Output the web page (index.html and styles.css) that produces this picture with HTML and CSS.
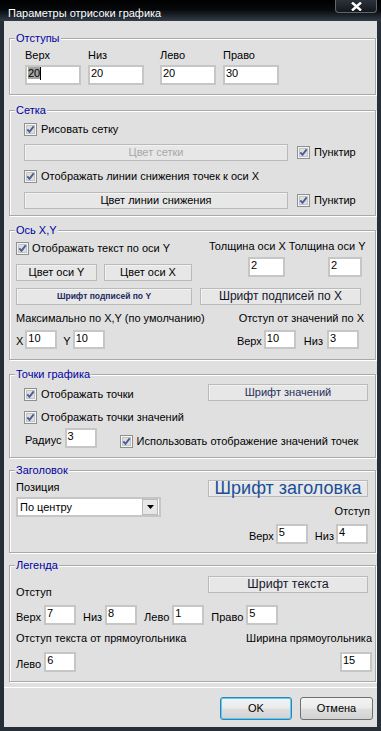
FILE: index.html
```html
<!DOCTYPE html>
<html lang="ru">
<head>
  <meta charset="UTF-8" />
  <title>Параметры отрисоки графика</title>
  <link rel="stylesheet" href="styles.css">
</head>
<body>
  <div class="window">
    <div class="titlebar">
      <span class="title">Параметры отрисоки графика</span>
      <span class="close">
        <svg width="11" height="9" viewBox="0 0 11 9"><path d="M1 0.5 L10 8.5 M10 0.5 L1 8.5" stroke="#fff" stroke-width="2.4"/></svg>
      </span>
    </div>

    <div class="client">
      <!-- Отступы -->
      <div class="group g-margins">
        <div class="caption">Отступы</div>
        <div class="margins-row">
          <div class="cell"><span>Верх</span><div class="edit"><span class="sel">20</span><i class="caret"></i></div></div>
          <div class="cell"><span>Низ</span><div class="edit">20</div></div>
          <div class="cell spaced"><span>Лево</span><div class="edit">20</div></div>
          <div class="cell"><span>Право</span><div class="edit">30</div></div>
        </div>
      </div>

      <!-- Сетка -->
      <div class="group g-grid">
        <div class="caption">Сетка</div>
        <div class="check grid-r1">
          <svg class="chk" viewBox="0 0 13 13"><rect x="0.5" y="0.5" width="12" height="12" fill="#f4f4f4" stroke="#8e8f8f"/><rect x="2.5" y="2.5" width="8" height="8" fill="#dedede" stroke="#c4c4c4"/><path d="M3.3 6.3 L5.5 8.8 L9.7 3.4" fill="none" stroke="#4a5d98" stroke-width="1.9"/></svg>
          <span>Рисовать сетку</span>
        </div>
        <div class="row grid-r2">
          <div class="btn wide disabled">Цвет сетки</div>
          <div class="check push">
            <svg class="chk" viewBox="0 0 13 13"><rect x="0.5" y="0.5" width="12" height="12" fill="#f4f4f4" stroke="#8e8f8f"/><rect x="2.5" y="2.5" width="8" height="8" fill="#dedede" stroke="#c4c4c4"/><path d="M3.3 6.3 L5.5 8.8 L9.7 3.4" fill="none" stroke="#4a5d98" stroke-width="1.9"/></svg>
            <span>Пунктир</span>
          </div>
        </div>
        <div class="check grid-r3">
          <svg class="chk" viewBox="0 0 13 13"><rect x="0.5" y="0.5" width="12" height="12" fill="#f4f4f4" stroke="#8e8f8f"/><rect x="2.5" y="2.5" width="8" height="8" fill="#dedede" stroke="#c4c4c4"/><path d="M3.3 6.3 L5.5 8.8 L9.7 3.4" fill="none" stroke="#4a5d98" stroke-width="1.9"/></svg>
          <span>Отображать линии снижения точек к оси X</span>
        </div>
        <div class="row grid-r4">
          <div class="btn wide">Цвет линии снижения</div>
          <div class="check push">
            <svg class="chk" viewBox="0 0 13 13"><rect x="0.5" y="0.5" width="12" height="12" fill="#f4f4f4" stroke="#8e8f8f"/><rect x="2.5" y="2.5" width="8" height="8" fill="#dedede" stroke="#c4c4c4"/><path d="M3.3 6.3 L5.5 8.8 L9.7 3.4" fill="none" stroke="#4a5d98" stroke-width="1.9"/></svg>
            <span>Пунктир</span>
          </div>
        </div>
      </div>

      <!-- Ось X,Y -->
      <div class="group g-axis">
        <div class="caption">Ось X,Y</div>
        <div class="axis-top">
          <div class="axis-left">
            <div class="check axis-check">
              <svg class="chk" viewBox="0 0 13 13"><rect x="0.5" y="0.5" width="12" height="12" fill="#f4f4f4" stroke="#8e8f8f"/><rect x="2.5" y="2.5" width="8" height="8" fill="#dedede" stroke="#c4c4c4"/><path d="M3.3 6.3 L5.5 8.8 L9.7 3.4" fill="none" stroke="#4a5d98" stroke-width="1.9"/></svg>
              <span>Отображать текст по оси Y</span>
            </div>
            <div class="axis-btns">
              <div class="btn btn-ay">Цвет оси Y</div>
              <div class="btn btn-ax">Цвет оси X</div>
            </div>
            <div class="btn btn-fonty">Шрифт подписей по Y</div>
          </div>
          <div class="axis-right">
            <div class="thick-labels">
              <span>Толщина оси X</span>
              <span>Толщина оси Y</span>
            </div>
            <div class="thick-edits">
              <div class="edit e-thx">2</div>
              <div class="edit e-thy">2</div>
            </div>
            <div class="btn btn-fontx">Шрифт подписей по X</div>
          </div>
        </div>
        <div class="axis-labels">
          <span>Максимально по X,Y (по умолчанию)</span>
          <span>Отступ от значений по X</span>
        </div>
        <div class="axis-edits">
          <span class="lbl">X</span>
          <div class="edit small">10</div>
          <span class="lbl gap-y">Y</span>
          <div class="edit small">10</div>
          <span class="lbl push-right">Верх</span>
          <div class="edit small">10</div>
          <span class="lbl gap-niz">Низ</span>
          <div class="edit small last">3</div>
        </div>
      </div>

      <!-- Точки графика -->
      <div class="group g-points">
        <div class="caption">Точки графика</div>
        <div class="pts-r1">
          <div class="check">
            <svg class="chk" viewBox="0 0 13 13"><rect x="0.5" y="0.5" width="12" height="12" fill="#f4f4f4" stroke="#8e8f8f"/><rect x="2.5" y="2.5" width="8" height="8" fill="#dedede" stroke="#c4c4c4"/><path d="M3.3 6.3 L5.5 8.8 L9.7 3.4" fill="none" stroke="#4a5d98" stroke-width="1.9"/></svg>
            <span>Отображать точки</span>
          </div>
          <div class="btn btn-font btn-values">Шрифт значений</div>
        </div>
        <div class="check pts-r2">
          <svg class="chk" viewBox="0 0 13 13"><rect x="0.5" y="0.5" width="12" height="12" fill="#f4f4f4" stroke="#8e8f8f"/><rect x="2.5" y="2.5" width="8" height="8" fill="#dedede" stroke="#c4c4c4"/><path d="M3.3 6.3 L5.5 8.8 L9.7 3.4" fill="none" stroke="#4a5d98" stroke-width="1.9"/></svg>
          <span>Отображать точки значений</span>
        </div>
        <div class="pts-r3">
          <span class="lbl">Радиус</span>
          <div class="edit small">3</div>
          <div class="check use-check">
            <svg class="chk" viewBox="0 0 13 13"><rect x="0.5" y="0.5" width="12" height="12" fill="#f4f4f4" stroke="#8e8f8f"/><rect x="2.5" y="2.5" width="8" height="8" fill="#dedede" stroke="#c4c4c4"/><path d="M3.3 6.3 L5.5 8.8 L9.7 3.4" fill="none" stroke="#4a5d98" stroke-width="1.9"/></svg>
            <span>Использовать отображение значений точек</span>
          </div>
        </div>
      </div>

      <!-- Заголовок -->
      <div class="group g-title">
        <div class="caption">Заголовок</div>
        <div class="title-cols">
          <div class="title-left">
            <div class="pos-label">Позиция</div>
            <div class="combo">
              <span class="combo-text">По центру</span>
              <span class="combo-btn">
                <svg width="7" height="4" viewBox="0 0 7 4"><path d="M0 0 H7 L3.5 4 Z" fill="#000"/></svg>
              </span>
            </div>
          </div>
          <div class="title-right">
            <div class="btn btn-font btn-caption">Шрифт заголовка</div>
            <div class="off-label">Отступ</div>
            <div class="off-edits">
              <span class="lbl">Верх</span>
              <div class="edit small">5</div>
              <span class="lbl gap-niz">Низ</span>
              <div class="edit small">4</div>
            </div>
          </div>
        </div>
      </div>

      <!-- Легенда -->
      <div class="group g-legend">
        <div class="caption">Легенда</div>
        <div class="leg-r1">
          <span class="leg-off">Отступ</span>
          <div class="btn btn-font btn-text">Шрифт текста</div>
        </div>
        <div class="leg-r2">
          <span class="lbl">Верх</span>
          <div class="edit small">7</div>
          <span class="lbl pair">Низ</span>
          <div class="edit small">8</div>
          <span class="lbl pair">Лево</span>
          <div class="edit small">1</div>
          <span class="lbl pair">Право</span>
          <div class="edit small">5</div>
        </div>
        <div class="leg-r3">
          <span>Отступ текста от прямоугольника</span>
          <span>Ширина прямоугольника</span>
        </div>
        <div class="leg-r4">
          <span class="lbl">Лево</span>
          <div class="edit small">6</div>
          <div class="edit small push-right">15</div>
        </div>
      </div>

      <div class="footer">
        <div class="dlg-btn default">OK</div>
        <div class="dlg-btn cancel">Отмена</div>
      </div>
    </div>
  </div>
</body>
</html>
```

FILE: styles.css
```css
* {
  margin: 0;
  padding: 0;
  box-sizing: border-box;
}

body {
  background: #262e38;
  font-family: "Liberation Sans", Arial, sans-serif;
  font-size: 11px;
  line-height: 13px;
  color: #000;
}

.window {
  width: 381px;
  height: 731px;
  display: flex;
  flex-direction: column;
  background: #262e38;
}

/* title bar */
.titlebar {
  height: 21px;
  display: flex;
  align-items: flex-start;
  background: linear-gradient(#000 0%, #06080a 45%, #323c48 100%);
}

.title {
  color: #fff;
  padding: 7px 0 0 8px;
}

.close {
  margin-left: auto;
  margin-right: 4px;
  width: 42px;
  height: 13px;
  display: flex;
  align-items: center;
  justify-content: center;
  border: 1px solid #5e6672;
  border-top: none;
  border-radius: 0 0 4px 4px;
  background: linear-gradient(#2c323a, #14181d);
}

.client {
  flex: 1;
  margin: 0 4px 4px;
  background: #e0e0e0;
  display: flex;
  flex-direction: column;
}

/* group boxes */
.group {
  margin-left: 5px;
  width: 367px;
  border: 1px solid #a9a9a9;
  box-shadow: 1px 1px 0 #fff, inset 1px 1px 0 #fff;
}

.g-margins { margin-top: 17px; height: 57px; }
.g-grid    { margin-top: 15px; height: 106px; }
.g-axis    { margin-top: 14px; height: 130px; }
.g-points  { margin-top: 14px; height: 84px; }
.g-title   { margin-top: 12px; height: 83px; }
.g-legend  { margin-top: 12px; height: 117px; }

.caption {
  width: fit-content;
  height: 14px;
  line-height: 14px;
  margin: -8px 0 0 5px;
  padding: 0 1px;
  background: #e0e0e0;
  color: #0000a0;
}

/* controls */
.edit {
  height: 20px;
  border: 2px solid #c6c6c6;
  background: #fff;
  padding: 0 1px;
  line-height: 12px;
  white-space: nowrap;
}

.edit.small { width: 32px; }

.sel { background: #a3a3a3; }

.caret {
  display: inline-block;
  width: 1px;
  height: 13px;
  background: #000;
  vertical-align: top;
}

.check {
  display: flex;
  align-items: flex-start;
  gap: 4px;
  white-space: nowrap;
}

.chk {
  width: 13px;
  height: 13px;
  flex: none;
}

.btn {
  height: 17px;
  border: 1px solid #bababa;
  background: #e7e7e7;
  box-shadow: inset 1px 1px 0 #f3f3f3;
  display: flex;
  align-items: center;
  justify-content: center;
  white-space: nowrap;
  overflow: hidden;
}

.btn.disabled { color: #a8a8a8; }

.lbl { margin-bottom: 1px; white-space: nowrap; }

.row {
  display: flex;
  align-items: center;
}

/* Отступы */
.margins-row {
  display: flex;
  gap: 7px;
  margin: 4px 0 0 15px;
}

.cell {
  width: 56px;
  display: flex;
  flex-direction: column;
  gap: 3px;
}

.cell.spaced { margin-left: 9px; }

/* Сетка */
.grid-r1 { margin: 6px 0 0 14px; }
.grid-r2 { margin: 8px 0 0 14px; }
.grid-r3 { margin: 9px 0 0 14px; }
.grid-r4 { margin: 9px 0 0 14px; }

.btn.wide { width: 264px; }
.check.push { margin-left: 9px; }

/* Ось X,Y */
.axis-top {
  display: flex;
  margin-left: 6px;
}

.axis-left { width: 176px; }

.axis-check { margin-top: 5px; gap: 3px; }

.axis-btns {
  display: flex;
  gap: 7px;
  margin-top: 9px;
}

.btn-ay { width: 81px; }
.btn-ax { width: 88px; }

.btn-fonty {
  margin-top: 7px;
  width: 176px;
  font-size: 8.5px;
  font-weight: bold;
  color: #1c2a5e;
}

.axis-right {
  margin-left: 8px;
  width: 162px;
}

.thick-labels {
  display: flex;
  gap: 3px;
  margin: 3px 0 0 9px;
  white-space: nowrap;
}

.thick-edits {
  display: flex;
  margin-top: 4px;
}

.e-thx { width: 37px; margin-left: 48px; }
.e-thy { width: 34px; margin-left: 43px; }

.btn-fontx {
  margin-top: 11px;
  width: 161px;
  font-size: 12px;
  color: #14142a;
}

.axis-labels {
  display: flex;
  justify-content: space-between;
  margin: 7px 11px 0 6px;
  white-space: nowrap;
}

.axis-edits {
  display: flex;
  align-items: flex-end;
  margin: 5px 0 0 6px;
}

.axis-edits .edit { height: 19px; margin-left: 2px; }
.axis-edits .gap-y { margin-left: 6px; }
.axis-edits .gap-niz { margin-left: 8px; }
.axis-edits .edit.last { margin-left: 4px; margin-right: 16px; }
.push-right { margin-left: auto; }

/* Точки графика */
.pts-r1 {
  display: flex;
  align-items: flex-end;
  margin: 3px 7px 0 14px;
}

.btn-font {
  margin-left: auto;
  width: 160px;
}

.btn-values { color: #1e2f5c; }

.pts-r2 { margin: 10px 0 0 14px; }

.pts-r3 {
  display: flex;
  align-items: flex-end;
  margin: 4px 0 0 15px;
}

.pts-r3 .edit { margin-left: 3px; }
.use-check { margin-left: 23px; }

/* Заголовок */
.title-cols {
  display: flex;
  margin-left: 6px;
}

.title-left { width: 145px; }

.pos-label { margin-top: 4px; }

.combo {
  margin-top: 3px;
  height: 20px;
  display: flex;
  align-items: center;
  border: 2px solid #c6c6c6;
  background: #fff;
}

.combo-text { padding-left: 2px; }

.combo-btn {
  margin: 0 1px 0 auto;
  width: 16px;
  height: 16px;
  display: flex;
  align-items: center;
  justify-content: center;
  background: #e7e7e7;
  border: 1px solid #bababa;
}

.title-right {
  margin-left: 47px;
  width: 162px;
}

.btn-caption {
  margin: 3px 0 0;
  font-size: 18px;
  line-height: 15px;
  overflow: visible;
  color: #1a4f98;
}

.off-label {
  margin-top: 8px;
  text-align: right;
}

.off-edits {
  display: flex;
  justify-content: flex-end;
  align-items: flex-end;
  margin: 6px 2px 0 0;
}

.off-edits .edit { margin-left: 2px; }
.off-edits .gap-niz { margin-left: 7px; }

/* Легенда */
.leg-r1 {
  display: flex;
  align-items: flex-start;
  margin: 4px 7px 0 6px;
}

.leg-off { margin-top: 10px; }

.btn-text {
  font-size: 12.5px;
  color: #17172a;
}

.leg-r2 {
  display: flex;
  align-items: flex-end;
  margin: 6px 0 0 6px;
}

.leg-r2 .edit { margin-left: 3px; }
.leg-r2 .pair { margin-left: 7px; }

.leg-r3 {
  display: flex;
  justify-content: space-between;
  margin: 7px 3px 0 6px;
  white-space: nowrap;
}

.leg-r4 {
  display: flex;
  align-items: flex-end;
  margin: 7px 3px 0 6px;
}

.leg-r4 .edit { margin-left: 3px; }
.leg-r4 .edit.push-right { margin-left: auto; }

/* buttons at the bottom */
.footer {
  margin-top: 5px;
  border-top: 1px solid #fff;
  display: flex;
  justify-content: flex-end;
  gap: 8px;
  padding: 9px 4px 0 0;
}

.dlg-btn {
  width: 72px;
  height: 23px;
  display: flex;
  align-items: center;
  justify-content: center;
  border: 1px solid #707070;
  border-radius: 3px;
  background: linear-gradient(#f3f3f3 0%, #ececec 45%, #dedede 55%, #d2d2d2 100%);
}

.dlg-btn.default {
  border-color: #3c7fb1;
  box-shadow: inset 0 0 0 1px #4cd2f6;
}

.dlg-btn.cancel { width: 73px; }
```
